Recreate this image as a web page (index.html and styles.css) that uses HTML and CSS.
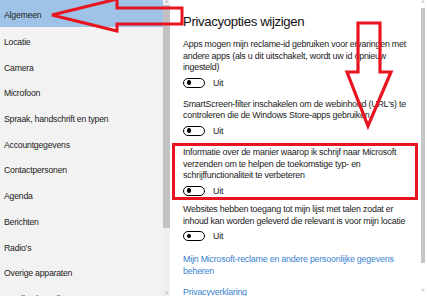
FILE: index.html
```html
<!DOCTYPE html>
<html lang="nl">
<head>
<meta charset="utf-8">
<title>Privacyopties wijzigen</title>
<link rel="stylesheet" href="styles.css">
</head>
<body>
<div class="window">
  <nav class="nav">
    <ul class="nav-list">
      <li class="nav-item selected">Algemeen</li>
      <li class="nav-item">Locatie</li>
      <li class="nav-item">Camera</li>
      <li class="nav-item">Microfoon</li>
      <li class="nav-item">Spraak, handschrift en typen</li>
      <li class="nav-item">Accountgegevens</li>
      <li class="nav-item">Contactpersonen</li>
      <li class="nav-item">Agenda</li>
      <li class="nav-item">Berichten</li>
      <li class="nav-item">Radio’s</li>
      <li class="nav-item">Overige apparaten</li>
      <li class="nav-item">Feedback en diagnose</li>
    </ul>
  </nav>
  <div class="scrollbar scrollbar-left">
    <span class="sb-arrow">&#x02C4;</span>
    <span class="sb-thumb"></span>
    <span class="sb-fill"></span>
    <span class="sb-arrow">&#x02C5;</span>
  </div>
  <main class="content">
    <h1 class="title">Privacyopties wijzigen</h1>

    <section class="setting first">
      <p class="desc">Apps mogen mijn reclame-id gebruiken voor ervaringen met<br>andere apps (als u dit uitschakelt, wordt uw id opnieuw<br>ingesteld)</p>
      <div class="toggle-row"><span class="toggle"><span class="knob"></span></span><span class="state">Uit</span></div>
    </section>

    <section class="setting">
      <p class="desc">SmartScreen-filter inschakelen om de webinhoud (URL's) te<br>controleren die de Windows Store-apps gebruiken</p>
      <div class="toggle-row"><span class="toggle"><span class="knob"></span></span><span class="state">Uit</span></div>
    </section>

    <section class="setting highlight">
      <p class="desc">Informatie over de manier waarop ik schrijf naar Microsoft<br>verzenden om te helpen de toekomstige typ- en<br>schrijffunctionaliteit te verbeteren</p>
      <div class="toggle-row"><span class="toggle"><span class="knob"></span></span><span class="state">Uit</span></div>
    </section>

    <section class="setting after-highlight">
      <p class="desc">Websites hebben toegang tot mijn lijst met talen zodat er<br>inhoud kan worden geleverd die relevant is voor mijn locatie</p>
      <div class="toggle-row"><span class="toggle"><span class="knob"></span></span><span class="state">Uit</span></div>
    </section>

    <a class="link link-manage" href="#">Mijn Microsoft-reclame en andere persoonlijke gegevens<br>beheren</a>
    <a class="link link-privacy" href="#">Privacyverklaring</a>
  </main>
  <div class="scrollbar scrollbar-right">
    <span class="sb-arrow">&#x02C4;</span>
    <span class="sb-thumb"></span>
    <span class="sb-fill"></span>
    <span class="sb-arrow">&#x02C5;</span>
  </div>

  <svg class="annotations" width="427" height="296" viewBox="0 0 427 296" aria-hidden="true">
    <path d="M52 15 L117 -1 L117 8 L182 8 L182 24 L117 24 L117 31 Z" fill="none" stroke="#e8141f" stroke-width="3" stroke-linejoin="miter"/>
    <path d="M358 23 L380 23 L380 72 L391 72 L368 126 L347 72 L358 72 Z" fill="none" stroke="#e8141f" stroke-width="3.2" stroke-linejoin="miter"/>
  </svg>
</div>
</body>
</html>
```

FILE: styles.css
```css
* {
  box-sizing: border-box;
}

html, body {
  margin: 0;
  padding: 0;
  background: #ffffff;
}

body {
  font-family: "Liberation Sans", Arial, sans-serif;
  color: #222222;
}

.window {
  position: relative;
  width: 427px;
  height: 296px;
  overflow: hidden;
  display: flex;
  padding-right: 2px;
}

/* Left navigation */
.nav {
  width: 163px;
  flex: none;
  background: #f2f2f2;
  overflow: hidden;
}

.nav-list {
  list-style: none;
  margin: 0;
  padding: 0;
}

.nav-item {
  height: 25.7px;
  padding: 5px 0 0 4px;
  line-height: 20px;
  font-size: 8.7px;
  letter-spacing: -0.22px;
  color: #222222;
  white-space: nowrap;
}

.nav-item.selected {
  background: #9ec3e6;
  height: 27px;
}

/* Scrollbars */
.scrollbar {
  flex: none;
  display: flex;
  flex-direction: column;
  align-items: stretch;
}

.scrollbar-left {
  width: 7px;
  background: #f0f0f0;
}

.scrollbar-left .sb-thumb {
  height: 223px;
  background: #c2c2c2;
}

.scrollbar-right {
  width: 4px;
  background: #ffffff;
}

.scrollbar-right .sb-arrow {
  height: 8px;
}

.scrollbar-right .sb-thumb {
  height: 255px;
  background: #c6c6c6;
}

.sb-arrow {
  height: 5px;
  font-size: 6px;
  line-height: 5px;
  text-align: center;
  color: #8a8a8a;
  overflow: hidden;
}

.sb-fill {
  flex: 1;
}

/* Content */
.content {
  flex: 1;
  min-width: 0;
  padding: 13px 3px 0 13px;
}

.title {
  margin: 0;
  font-size: 13.2px;
  letter-spacing: -0.35px;
  line-height: 18px;
  font-weight: normal;
  color: #111111;
  white-space: nowrap;
}

.setting {
  margin-top: 11px;
}

.setting.first {
  margin-top: 8px;
}

.desc {
  margin: 0;
  font-size: 8.9px;
  letter-spacing: -0.22px;
  line-height: 11.5px;
  color: #222222;
  white-space: nowrap;
}

.toggle-row {
  margin-top: 4px;
  height: 10px;
  display: flex;
  align-items: center;
}

.toggle {
  width: 22px;
  height: 10px;
  border: 1.5px solid #000000;
  border-radius: 5px;
  display: flex;
  align-items: center;
  padding-left: 2.5px;
}

.knob {
  width: 4.5px;
  height: 4.5px;
  border-radius: 50%;
  background: #000000;
}

.state {
  margin-left: 8px;
  font-size: 8.9px;
  letter-spacing: -0.2px;
  line-height: 10px;
  color: #222222;
}

.setting.highlight {
  margin-top: 7.5px;
  margin-left: -11px;
  border: 3px solid #e8141f;
  padding: 1px 2px 1px 8px;
}

.setting.after-highlight {
  margin-top: 4.5px;
}

.link {
  display: block;
  font-size: 8.9px;
  letter-spacing: -0.22px;
  line-height: 11.5px;
  color: #3a82cf;
  text-decoration: none;
  white-space: nowrap;
}

.link-manage {
  margin-top: 13px;
}

.link-privacy {
  margin-top: 10px;
}

/* Annotation overlay */
.annotations {
  position: absolute;
  left: 0;
  top: 0;
  pointer-events: none;
}
```
